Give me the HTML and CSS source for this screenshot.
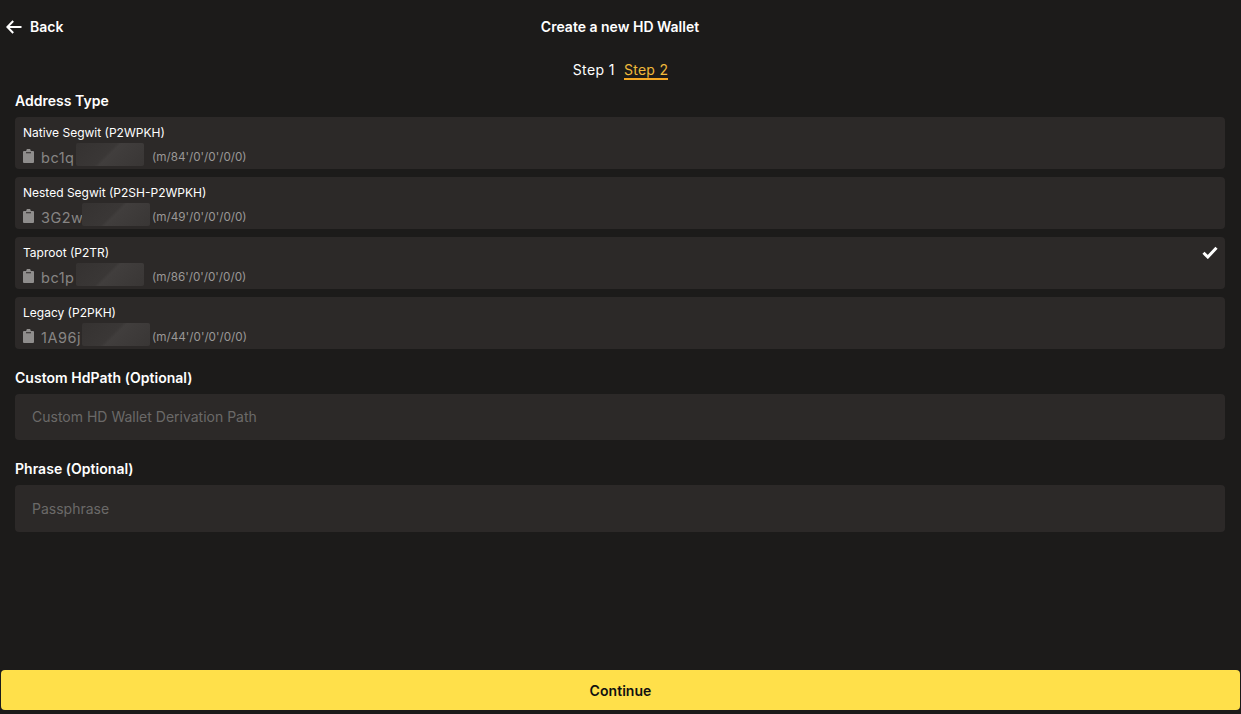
FILE: index.html
```html
<!DOCTYPE html>
<html lang="en">
<head>
    <meta charset="UTF-8">
    <meta name="viewport" content="width=device-width, initial-scale=1.0">
    <title>Create a new HD Wallet</title>
    <link rel="stylesheet" href="styles.css">
</head>
<body>
    <div class="page">
        <div class="header">
            <div class="back">
                <svg class="back-icon" viewBox="0 0 16 14" width="16" height="14">
                    <path d="M7.200 1 1.400 7l5.800 6M1.600 7H15.500" fill="none" stroke="#fff" stroke-width="2"/>
                </svg>
                <span>Back</span>
            </div>
            <div class="header-title">Create a new HD Wallet</div>
        </div>

        <div class="steps">
            <span class="step">Step 1</span>
            <span class="step active">Step 2</span>
        </div>

        <div class="content">
            <div class="label label-first">Address Type</div>
            <div class="address-list">
                <div class="address-row">
                    <div class="row-title"><span>Native Segwit (P2WPKH)</span></div>
                    <div class="row-detail">
                        <svg class="clip-icon" viewBox="0 0 11 14" width="11" height="14"><path fill-rule="evenodd" d="M1 2h2.200a2.300 2.300 0 0 1 4.600 0H10a1 1 0 0 1 1 1v10a1 1 0 0 1-1 1H1a1 1 0 0 1-1-1V3a1 1 0 0 1 1-1zM3 3.200v1h5v-1z"/></svg>
                        <div class="address"><span class="address-start">bc1q</span><span class="redacted"></span></div>
                        <span class="path">(m/84'/0'/0'/0/0)</span>
                    </div>
                </div>
                <div class="address-row">
                    <div class="row-title"><span>Nested Segwit (P2SH-P2WPKH)</span></div>
                    <div class="row-detail">
                        <svg class="clip-icon" viewBox="0 0 11 14" width="11" height="14"><path fill-rule="evenodd" d="M1 2h2.200a2.300 2.300 0 0 1 4.600 0H10a1 1 0 0 1 1 1v10a1 1 0 0 1-1 1H1a1 1 0 0 1-1-1V3a1 1 0 0 1 1-1zM3 3.200v1h5v-1z"/></svg>
                        <div class="address"><span class="address-start wide">3G2w</span><span class="redacted"></span></div>
                        <span class="path">(m/49'/0'/0'/0/0)</span>
                    </div>
                </div>
                <div class="address-row">
                    <div class="row-title">
                        <span>Taproot (P2TR)</span>
                        <svg class="check-icon" viewBox="0 0 16 13" width="16" height="13"><path d="M1.500 6.800 5.800 11 14.500 1.800" fill="none" stroke="#fff" stroke-width="3"/></svg>
                    </div>
                    <div class="row-detail">
                        <svg class="clip-icon" viewBox="0 0 11 14" width="11" height="14"><path fill-rule="evenodd" d="M1 2h2.200a2.300 2.300 0 0 1 4.600 0H10a1 1 0 0 1 1 1v10a1 1 0 0 1-1 1H1a1 1 0 0 1-1-1V3a1 1 0 0 1 1-1zM3 3.200v1h5v-1z"/></svg>
                        <div class="address"><span class="address-start">bc1p</span><span class="redacted"></span></div>
                        <span class="path">(m/86'/0'/0'/0/0)</span>
                    </div>
                </div>
                <div class="address-row">
                    <div class="row-title"><span>Legacy (P2PKH)</span></div>
                    <div class="row-detail">
                        <svg class="clip-icon" viewBox="0 0 11 14" width="11" height="14"><path fill-rule="evenodd" d="M1 2h2.200a2.300 2.300 0 0 1 4.600 0H10a1 1 0 0 1 1 1v10a1 1 0 0 1-1 1H1a1 1 0 0 1-1-1V3a1 1 0 0 1 1-1zM3 3.200v1h5v-1z"/></svg>
                        <div class="address"><span class="address-start wide">1A96j</span><span class="redacted"></span></div>
                        <span class="path">(m/44'/0'/0'/0/0)</span>
                    </div>
                </div>
            </div>

            <div class="label label-custom">Custom HdPath (Optional)</div>
            <input class="text-input" type="text" placeholder="Custom HD Wallet Derivation Path">

            <div class="label label-phrase">Phrase (Optional)</div>
            <input class="text-input" type="text" placeholder="Passphrase">
        </div>

        <div class="footer">
            <button class="continue-btn">Continue</button>
        </div>
    </div>
</body>
</html>
```

FILE: styles.css
```css
* {
    box-sizing: border-box;
}
body {
    margin: 0;
    font-family: Inter, "Liberation Sans", sans-serif;
    background-color: #1c1b1a;
    color: #fff;
}
.page {
    display: flex;
    flex-direction: column;
    height: 714px;
}
.header {
    display: grid;
    grid-template-columns: 1fr auto 1fr;
    align-items: center;
    height: 53px;
    padding: 0 7px 0 6px;
    font-size: 14px;
    font-weight: 600;
}
.header-title {
    grid-column: 2;
    grid-row: 1;
}
.back {
    grid-column: 1;
    grid-row: 1;
    display: flex;
    align-items: center;
    gap: 8px;
}
.back-icon {
    display: block;
}
.steps {
    display: flex;
    justify-content: center;
    gap: 9px;
    height: 27px;
    padding-top: 8px;
    font-size: 14px;
    line-height: 18px;
}
.step {
    height: 19px;
    letter-spacing: 0.4px;
}
.step.active {
    color: #efb93a;
    letter-spacing: 0.3px;
    border-bottom: 2px solid #f5a823;
}
.content {
    padding: 0 16px 0 15px;
}
.label {
    font-size: 14px;
    font-weight: 600;
    line-height: 18px;
    letter-spacing: 0.03px;
}
.label-first {
    margin-top: 12px;
    margin-bottom: 7px;
}
.label-custom {
    margin-top: 20px;
    margin-bottom: 7px;
}
.label-phrase {
    margin-top: 19.8px;
    margin-bottom: 7px;
}
.address-list {
    display: flex;
    flex-direction: column;
    gap: 8px;
}
.address-row {
    height: 52px;
    padding: 8px 7px 0 8px;
    background-color: #2c2928;
    border-radius: 4px;
}
.row-title {
    display: flex;
    justify-content: space-between;
    align-items: center;
    height: 16px;
    font-size: 12px;
    line-height: 16px;
}
.check-icon {
    display: block;
    margin-bottom: 2px;
}
.row-detail {
    display: flex;
    align-items: center;
    height: 24px;
    margin-top: 4px;
}
.clip-icon {
    display: block;
    flex: none;
    fill: #8f8d8c;
    margin-right: 7px;
    margin-top: -2px;
}
.address {
    display: flex;
    align-items: center;
    width: 111px;
    flex: none;
    font-size: 14.5px;
    letter-spacing: 0.5px;
    color: #878584;
}
.address-start {
    flex: none;
    width: 35px;
    white-space: nowrap;
}
.address-start.wide {
    width: 41px;
}
/* blurred-out part of the address sits a little above the text line */
.redacted {
    display: block;
    flex: none;
    width: 68px;
    height: 23px;
    margin-bottom: 5px;
    border-radius: 2px;
    background: linear-gradient(135deg, #353231 0%, #3a3736 45%, #413e3d 50%, #393635 100%);
}
.path {
    font-size: 11.7px;
    color: #9a9897;
}
.text-input {
    display: block;
    width: 100%;
    height: 46.4px;
    padding: 0 17px 0.5px;
    border: none;
    border-radius: 4px;
    background-color: #2c2928;
    color: #fff;
    font-family: inherit;
    font-size: 14px;
}
.text-input::placeholder {
    color: #6b6968;
    opacity: 1;
}
.footer {
    margin-top: auto;
    padding: 0 1px 4px;
}
.continue-btn {
    display: block;
    width: 100%;
    height: 40px;
    border: none;
    border-radius: 4px;
    background-color: #ffe04a;
    color: #111;
    font-family: inherit;
    font-size: 14px;
    font-weight: 600;
    letter-spacing: 0.05px;
}
```
